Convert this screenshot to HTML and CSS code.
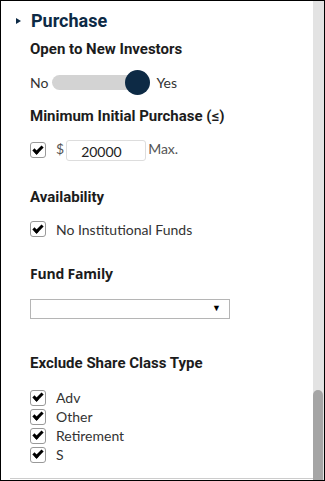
FILE: index.html
```html
<!DOCTYPE html>
<html lang="en">
<head>
    <meta charset="UTF-8">
    <title>Purchase Filters</title>
    <link rel="stylesheet" href="styles.css">
</head>
<body>
    <div class="frame">
        <div class="panel">
            <h2 class="section-title"><span class="caret"></span>Purchase</h2>

            <h3 class="first">Open to New Investors</h3>
            <div class="toggle-row">
                <span>No</span>
                <span class="toggle"><span class="knob"></span></span>
                <span class="yes">Yes</span>
            </div>

            <h3 class="after-toggle">Minimum Initial Purchase (&le;)</h3>
            <div class="check-row purchase-row">
                <span class="check"></span>
                <span class="dollar">$</span>
                <span class="amount">20000</span>
                <span class="max">Max.</span>
            </div>

            <h3 class="spaced">Availability</h3>
            <div class="check-row">
                <span class="check"></span>
                <span>No Institutional Funds</span>
            </div>

            <h3 class="spaced alt">Fund Family</h3>
            <div class="select"><span class="arrow">&#9660;</span></div>

            <h3 class="after-select">Exclude Share Class Type</h3>
            <ul class="check-list">
                <li><span class="check"></span>Adv</li>
                <li><span class="check"></span>Other</li>
                <li><span class="check"></span>Retirement</li>
                <li><span class="check"></span>S</li>
            </ul>
            <div class="rule"></div>
        </div>
        <div class="scrollbar"><div class="thumb"></div></div>
    </div>
</body>
</html>
```

FILE: styles.css
```css
html, body {
    margin: 0;
    padding: 0;
}
body {
    font-family: Lato, "Open Sans", sans-serif;
    font-size: 14px;
    color: #333;
    background-color: #fff;
}
.frame {
    width: 325px;
    height: 481px;
    box-sizing: border-box;
    border: 1px solid #000;
    display: flex;
    overflow: hidden;
}
.panel {
    flex: 1;
    padding: 8px 0 0 29px;
    position: relative;
}
.section-title {
    margin: 0;
    font-family: Roboto, sans-serif;
    font-size: 18px;
    font-weight: bold;
    color: #0d2a45;
    line-height: 24px;
    position: relative;
    padding-left: 1px;
}
.caret {
    position: absolute;
    left: -14px;
    top: 9px;
    width: 0;
    height: 0;
    border-top: 3px solid transparent;
    border-bottom: 3px solid transparent;
    border-left: 5px solid #0d2a45;
}
h3 {
    margin: 0;
    font-family: Roboto, sans-serif;
    font-size: 15px;
    font-weight: bold;
    color: #1c1c1c;
    line-height: 18px;
}
h3.alt {
    font-family: "Open Sans", sans-serif;
    font-size: 14px;
    letter-spacing: -0.2px;
}
h3.first {
    margin-top: 7px;
}
h3.after-toggle {
    margin-top: 12px;
}
h3.spaced {
    margin-top: 27px;
}
h3.alt.spaced {
    margin-top: 25px;
}
h3.after-select {
    margin-top: 35px;
}
.toggle-row {
    display: flex;
    align-items: center;
    height: 26px;
    margin-top: 11px;
}
.toggle {
    width: 86px;
    height: 15px;
    border-radius: 8px;
    background-color: #d3d3d3;
    margin-left: 4px;
    position: relative;
}
.knob {
    position: absolute;
    right: -12px;
    top: -5px;
    width: 25px;
    height: 25px;
    border-radius: 50%;
    background-color: #0d2a45;
}
.yes {
    margin-left: 18px;
}
.check-row {
    display: flex;
    align-items: center;
    height: 22px;
    margin-top: 12px;
}
.purchase-row {
    margin-top: 14px;
}
.check {
    width: 14px;
    height: 14px;
    border: 1px solid #999;
    border-radius: 3px;
    display: inline-flex;
    align-items: center;
    justify-content: center;
    margin-right: 10px;
    flex: none;
}
.check::after {
    content: "";
    width: 7px;
    height: 3px;
    border-left: 3px solid #000;
    border-bottom: 3px solid #000;
    transform: rotate(-45deg);
    margin-top: -3px;
}
.dollar {
    color: #555;
    margin-top: -3px;
}
.amount {
    box-sizing: border-box;
    width: 80px;
    height: 21px;
    border: 1px solid #ddd;
    border-radius: 3px;
    margin-left: 2px;
    padding-left: 14px;
    line-height: 22px;
    color: #222;
}
.max {
    color: #555;
    margin-left: 2px;
    margin-top: -4px;
}
.select {
    width: 200px;
    height: 20px;
    box-sizing: border-box;
    border: 1px solid #b5b5b5;
    margin-top: 16px;
    position: relative;
}
.arrow {
    position: absolute;
    right: 8px;
    top: 2px;
    font-size: 9px;
    color: #000;
}
.check-list {
    list-style-type: none;
    padding: 0;
    margin: 16px 0 0;
}
.check-list li {
    display: flex;
    align-items: center;
    height: 19px;
}
.rule {
    position: absolute;
    left: 9px;
    right: 0;
    bottom: 1px;
    height: 1px;
    background-color: #ccc;
}
.scrollbar {
    width: 11px;
    background-color: #e3e3e3;
    position: relative;
}
.thumb {
    position: absolute;
    left: 0;
    right: 1px;
    top: 389px;
    bottom: 0;
    background-color: #a5a5a5;
    border-radius: 5px 5px 0 0;
}
```
